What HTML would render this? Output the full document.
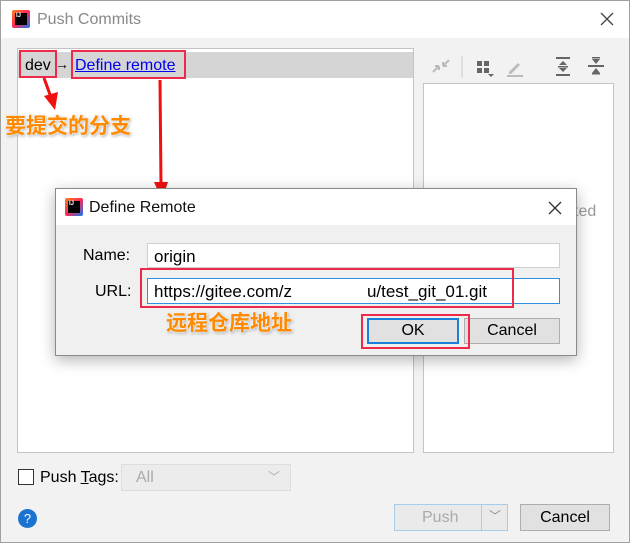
<!DOCTYPE html>
<html><head><meta charset="utf-8"><style>
*{box-sizing:border-box;margin:0;padding:0}
body{width:630px;height:543px;overflow:hidden;background:#f0f0f0;font-family:"Liberation Sans","Noto Sans CJK SC",sans-serif;position:relative;font-size:16px;color:#000}
.a{position:absolute}
.win{left:0;top:0;width:630px;height:543px;border:1px solid #a0a0a0;background:#f2f2f2}
.red{position:absolute;border:2px solid #ee2a4a}
.cn{position:absolute;color:#ff8a00;font-size:21px;font-weight:bold;text-shadow:0 0 2px #fff,0 0 3px #fff,1px 1px 3px #777;font-family:"Noto Sans CJK SC",sans-serif}
.btn{position:absolute;border:1px solid #adadad;background:#e1e1e1;text-align:center;font-size:16px}
</style></head><body>
<div class="a win"></div>
<div class="a" style="left:1px;top:1px;width:628px;height:37px;background:#fff"></div>
<div class="a" style="left:12px;top:10px;width:18px;height:18px;background:linear-gradient(135deg,#fc801d,#fe2857 50%,#087cfa);border-radius:2px"><div style="position:absolute;left:3px;top:3px;width:12px;height:12px;background:#000;color:#fff;font-size:6px;font-weight:bold;line-height:7px;padding-left:1px">IJ</div></div>
<div class="a" style="left:37px;top:11px;color:#888;font-size:16px">Push Commits</div>
<svg class="a" style="left:600px;top:12px" width="14" height="14"><path d="M1 1L13 13M13 1L1 13" stroke="#444" stroke-width="1.3"/></svg>
<!-- left panel -->
<div class="a" style="left:17px;top:48px;width:397px;height:405px;background:#fff;border:1px solid #c4c4c4"></div>
<div class="a" style="left:18px;top:52px;width:395px;height:26px;background:#d5d5d5"></div>
<div class="a" style="left:25px;top:57px">dev</div>
<div class="a" style="left:55px;top:56px;font-size:14px">→</div>
<div class="a" style="left:75px;top:57px;color:#0000ee;text-decoration:underline">Define remote</div>
<div class="red" style="left:19px;top:50px;width:38px;height:28px"></div>
<div class="red" style="left:71px;top:50px;width:115px;height:29px"></div>
<svg class="a" style="left:0;top:0" width="630" height="543">
<line x1="44" y1="78" x2="52" y2="100" stroke="#f01010" stroke-width="3"/>
<polygon points="44,96 58,92 55,110" fill="#f01010"/>
<line x1="160" y1="80" x2="161" y2="186" stroke="#f01010" stroke-width="3"/>
<polygon points="154,182 168,182 162,200" fill="#f01010"/>
</svg>
<div class="cn" style="left:5px;top:110px">要提交的分支</div>
<!-- right toolbar -->
<svg class="a" style="left:425px;top:52px" width="190" height="30">
<path d="M8 20l6-6M14 14h-4M14 14v4M24 8l-6 6M18 14h4M18 14v-4" stroke="#bbb" stroke-width="2"/>
<line x1="37" y1="4" x2="37" y2="26" stroke="#ccc"/>
<g fill="#666"><rect x="52" y="9" width="5" height="5"/><rect x="59" y="9" width="5" height="5"/><rect x="52" y="16" width="5" height="5"/><rect x="59" y="16" width="5" height="5"/><polygon points="63,22 69,22 66,25"/></g>
<path d="M84 20l9-9 2 2-9 9h-2z" fill="#bbb"/><rect x="82" y="23" width="16" height="2" fill="#bbb"/>
<g fill="#666"><rect x="131" y="5" width="14" height="2"/><rect x="131" y="22" width="14" height="2"/><polygon points="138,9 142,13 134,13"/><polygon points="138,20 142,16 134,16"/><rect x="133" y="14" width="10" height="1.5"/></g>
<g fill="#666"><rect x="163" y="13" width="16" height="2"/><polygon points="171,12 175,7 167,7"/><polygon points="171,16 175,21 167,21"/><rect x="167" y="5" width="8" height="1.5"/><rect x="167" y="21" width="8" height="1.5"/></g>
</svg>
<div class="a" style="left:423px;top:83px;width:191px;height:370px;background:#fff;border:1px solid #c4c4c4"></div>
<div class="a" style="left:574px;top:203px;color:#999">ted</div>
<!-- dialog -->
<div class="a" style="left:55px;top:188px;width:522px;height:168px;background:#f0f0f0;border:1px solid #8a8a8a;box-shadow:0 4px 14px rgba(0,0,0,.3)"></div>
<div class="a" style="left:56px;top:189px;width:520px;height:36px;background:#fff"></div>
<div class="a" style="left:65px;top:198px;width:18px;height:18px;background:linear-gradient(135deg,#fc801d,#fe2857 50%,#087cfa);border-radius:2px"><div style="position:absolute;left:3px;top:3px;width:12px;height:12px;background:#000;color:#fff;font-size:6px;font-weight:bold;line-height:7px;padding-left:1px">IJ</div></div>
<div class="a" style="left:89px;top:199px;color:#111">Define Remote</div>
<svg class="a" style="left:548px;top:201px" width="14" height="14"><path d="M1 1L13 13M13 1L1 13" stroke="#333" stroke-width="1.3"/></svg>
<div class="a" style="left:83px;top:247px">Name:</div>
<div class="a" style="left:95px;top:283px">URL:</div>
<div class="a" style="left:147px;top:243px;width:413px;height:25px;background:#fff;border:1px solid #cfcfcf;padding:3px 6px;font-size:17px">origin</div>
<div class="a" style="left:147px;top:278px;width:413px;height:26px;background:#fff;border:1px solid #2f8fe0;padding:3px 6px;font-size:17px;white-space:pre">https://gitee.com/z<span style="display:inline-block;width:75px"></span>u/test_git_01.git</div>
<div class="red" style="left:140px;top:268px;width:374px;height:40px"></div>
<div class="cn" style="left:166px;top:307px">远程仓库地址</div>
<div class="btn" style="left:367px;top:318px;width:92px;height:26px;border:2px solid #1a7fd8;line-height:22px">OK</div>
<div class="btn" style="left:464px;top:318px;width:96px;height:26px;line-height:24px">Cancel</div>
<div class="red" style="left:361px;top:314px;width:109px;height:35px"></div>
<!-- bottom -->
<div class="a" style="left:18px;top:469px;width:16px;height:16px;background:#fff;border:1px solid #333"></div>
<div class="a" style="left:40px;top:469px">Push <u>T</u>ags:</div>
<div class="a" style="left:121px;top:464px;width:170px;height:27px;background:#ececec;border:1px solid #ddd;color:#aaa;padding:4px 14px">All<span style="position:absolute;right:10px;top:3px;color:#aaa;font-size:12px">﹀</span></div>
<div class="a" style="left:18px;top:509px;width:19px;height:19px;border-radius:50%;background:#1a73d1;color:#fff;font-size:13px;text-align:center;line-height:19px">?</div>
<div class="a" style="left:394px;top:504px;width:114px;height:27px;border:1px solid #a8cde9;background:#eaeaea"></div>
<div class="a" style="left:481px;top:505px;width:1px;height:25px;background:#a8cde9"></div>
<div class="a" style="left:422px;top:509px;color:#aaa">Push</div>
<div class="a" style="left:489px;top:507px;color:#888;font-size:12px">﹀</div>
<div class="btn" style="left:520px;top:504px;width:90px;height:27px;line-height:25px">Cancel</div>
</body></html>
